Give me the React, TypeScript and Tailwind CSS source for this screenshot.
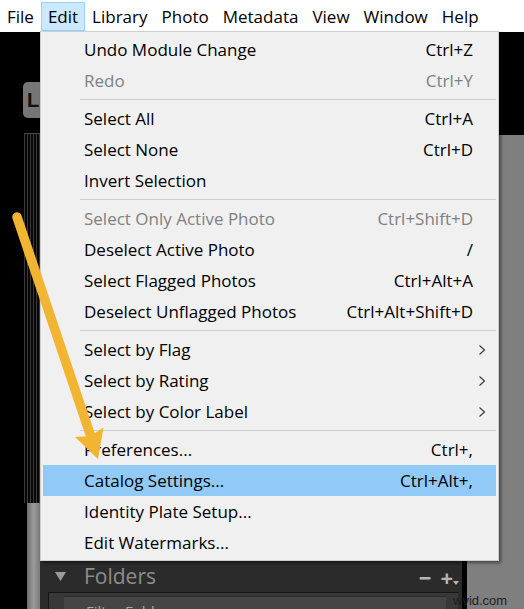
import React from "react";

type Item =
  | { kind: "item"; label: string; shortcut?: string; disabled?: boolean; sub?: boolean; active?: boolean }
  | { kind: "sep" };

const items: Item[] = [
  { kind: "item", label: "Undo Module Change", shortcut: "Ctrl+Z" },
  { kind: "item", label: "Redo", shortcut: "Ctrl+Y", disabled: true },
  { kind: "sep" },
  { kind: "item", label: "Select All", shortcut: "Ctrl+A" },
  { kind: "item", label: "Select None", shortcut: "Ctrl+D" },
  { kind: "item", label: "Invert Selection" },
  { kind: "sep" },
  { kind: "item", label: "Select Only Active Photo", shortcut: "Ctrl+Shift+D", disabled: true },
  { kind: "item", label: "Deselect Active Photo", shortcut: "/" },
  { kind: "item", label: "Select Flagged Photos", shortcut: "Ctrl+Alt+A" },
  { kind: "item", label: "Deselect Unflagged Photos", shortcut: "Ctrl+Alt+Shift+D" },
  { kind: "sep" },
  { kind: "item", label: "Select by Flag", sub: true },
  { kind: "item", label: "Select by Rating", sub: true },
  { kind: "item", label: "Select by Color Label", sub: true },
  { kind: "sep" },
  { kind: "item", label: "Preferences...", shortcut: "Ctrl+," },
  { kind: "item", label: "Catalog Settings...", shortcut: "Ctrl+Alt+,", active: true },
  { kind: "item", label: "Identity Plate Setup..." },
  { kind: "item", label: "Edit Watermarks..." },
];

const menus = ["File", "Edit", "Library", "Photo", "Metadata", "View", "Window", "Help"];

function Chevron() {
  return (
    <svg width="8" height="12" viewBox="0 0 8 12">
      <polyline points="1.5,1.5 6.5,6 1.5,10.5" fill="none" stroke="#333" strokeWidth="1.1" />
    </svg>
  );
}

export default function App() {
  return (
    <div className="relative w-[524px] h-[609px] overflow-hidden bg-black font-['Open_Sans',sans-serif] text-[17px]">
      {/* menu bar */}
      <div className="h-[32px] bg-white flex items-start text-black">
        {menus.map((m) => (
          <div
            key={m}
            className={
              m === "Edit"
                ? "mt-[2px] h-[29px] px-[6px] flex items-center bg-[#cce8ff] border border-[#99d1ff]"
                : "mt-[2px] h-[29px] px-[7px] flex items-center"
            }
          >
            {m}
          </div>
        ))}
      </div>

      {/* lightroom window behind */}
      <div className="flex h-[577px]">
        <div className="w-[23px] bg-black" />
        <div className="w-[17px] flex flex-col">
          <div className="h-[50px] shrink-0" />
          <div className="h-[36px] shrink-0 bg-[#767676] rounded-l-[5px] pl-[4px] flex items-center font-['Liberation_Sans',sans-serif] font-bold text-[20px] text-[#111]">
            Lr
          </div>
          <div className="h-[15px] shrink-0" />
          <div className="h-[370px] shrink-0 ml-[1px] border-t border-[#4a4a4a] bg-[repeating-linear-gradient(90deg,#3a3a3a_0px,#3a3a3a_1px,#070707_1px,#070707_3px)]" />
          <div className="flex-1 flex">
            <div className="w-[4px] bg-black" />
            <div className="flex-1 bg-[linear-gradient(90deg,#6e6e6e,#9a9a9a_50%,#7a7a7a)]" />
          </div>
        </div>
        <div className="w-[422px] flex flex-col">
          <div className="h-[529px] shrink-0 bg-black" />
          <div className="flex-1 min-h-0 overflow-hidden bg-[#2b2b2b] flex flex-col">
            <div className="h-[31px] shrink-0 flex items-center">
              <svg className="ml-[15px]" width="11" height="9" viewBox="0 0 11 9">
                <polygon points="0,0 11,0 5.5,9" fill="#9a9a9a" />
              </svg>
              <span className="ml-[18px] text-[21px] text-[#8d8d8d] leading-none">Folders</span>
              <span className="ml-auto text-[#b5b5b5] text-[22px] leading-none font-bold">−</span>
              <span className="ml-[9px] text-[#b5b5b5] text-[22px] leading-none font-bold">+</span>
              <svg className="mr-[3px] mt-[12px]" width="6" height="4" viewBox="0 0 6 4">
                <polygon points="0,0 6,0 3,4" fill="#b5b5b5" />
              </svg>
            </div>
            <div className="flex-1 min-h-0 ml-[8px] mr-[4px] border-t border-l border-[#161616] bg-[#383838] pt-[3px] pl-[15px] pr-[12px]">
              <div className="h-full overflow-hidden bg-[#454545] border-t border-[#2a2a2a] pl-[10px] pt-[7px] text-[15px] text-[#aaa] leading-none whitespace-nowrap">
                ⌕ Filter Folders
              </div>
            </div>
          </div>
        </div>
        <div className="w-[5px] bg-black" />
        <div className="flex-1 flex flex-col">
          <div className="h-[103px] shrink-0 bg-black" />
          <div className="flex-1 bg-[#7f7f7f]" />
        </div>
      </div>

      {/* edit menu dropdown */}
      <div className="absolute left-[40px] top-[31px] w-[459px] h-[530px] bg-[#f0f0f0] border border-[#cfcfcf] shadow-[2px_2px_3px_rgba(0,0,0,0.45)] py-[2px] text-black">
        {items.map((it, i) =>
          it.kind === "sep" ? (
            <div key={i} className="h-[7px] mx-[2px] flex items-center pl-[37px]">
              <div className="h-px w-full bg-[#cccccc]" />
            </div>
          ) : (
            <div
              key={i}
              className={
                "h-[31px] mx-[2px] flex items-center " +
                (it.active ? "bg-[#91c9f7] " : "") +
                (it.disabled ? "text-[#808080]" : "text-black")
              }
            >
              <span className="pl-[41px] flex-1 whitespace-nowrap">{it.label}</span>
              <span className="whitespace-nowrap">{it.shortcut ?? ""}</span>
              <span className="w-[23px] pl-[5px] flex items-center">{it.sub ? <Chevron /> : null}</span>
            </div>
          )
        )}
      </div>

      {/* watermark */}
      <div className="absolute left-[453px] top-[591px] text-[13px] text-[#1e1e1e] font-['Liberation_Sans',sans-serif]">
        wvid.com
      </div>

      {/* annotation arrow */}
      <svg className="absolute left-0 top-0 pointer-events-none" width="524" height="609" viewBox="0 0 524 609">
        <line x1="17" y1="217" x2="90" y2="434" stroke="#f2b531" strokeWidth="9.5" strokeLinecap="round" />
        <polygon points="98,459 75,437 90.5,436 103.5,427.5" fill="#f2b531" />
      </svg>
    </div>
  );
}
